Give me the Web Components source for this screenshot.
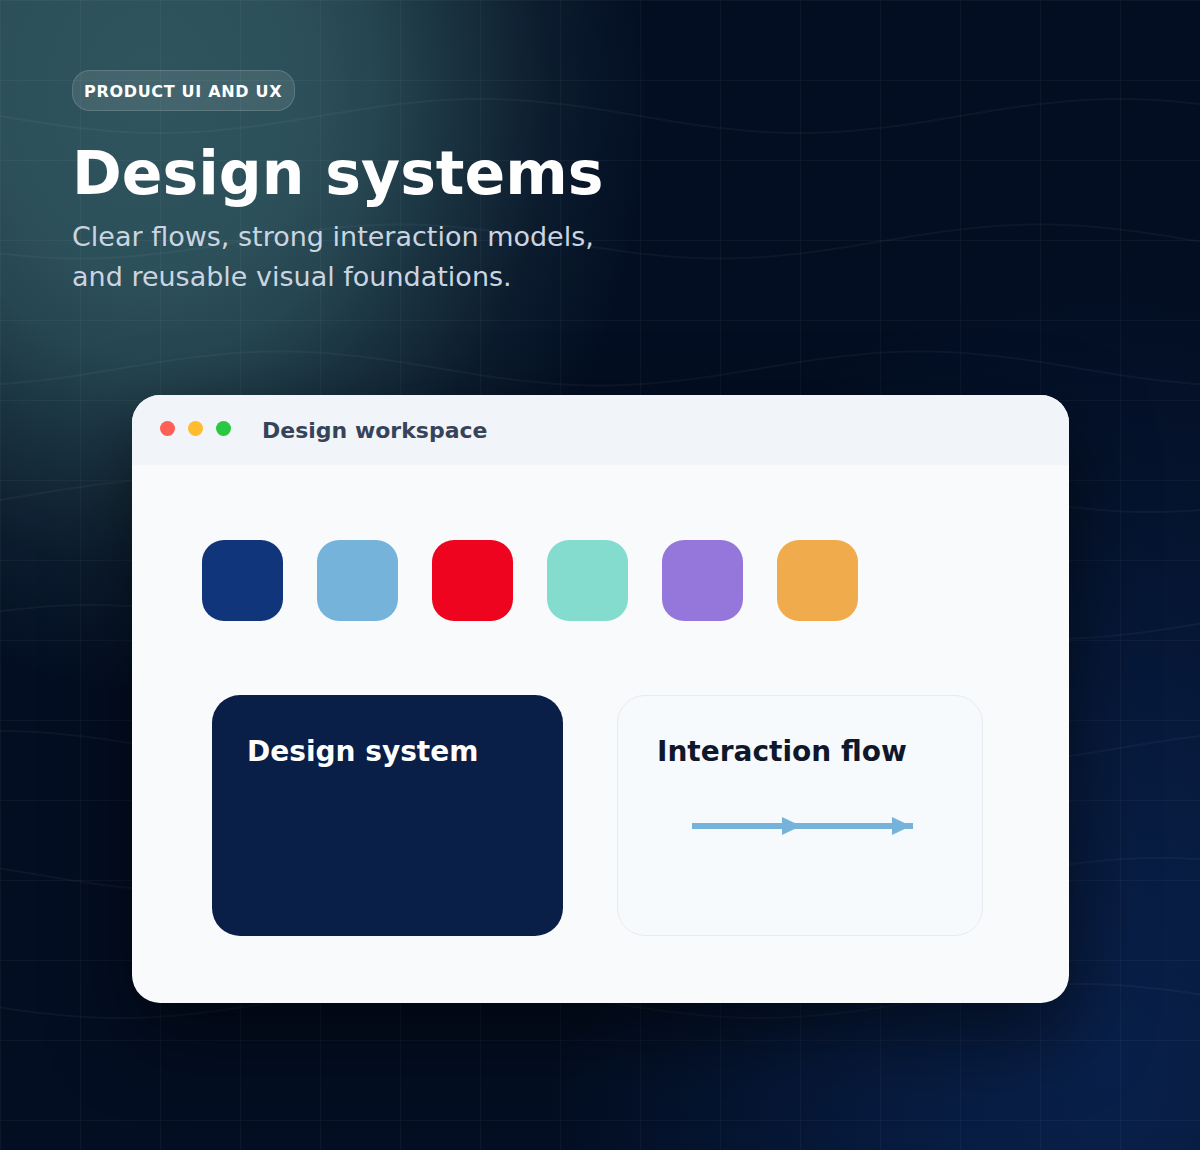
<!DOCTYPE html>
<html lang="en"><head><meta charset="utf-8"><title>Design systems</title>
<style>
html,body{margin:0;padding:0;background:#030e22}
body{font-family:"DejaVu Sans",sans-serif;width:1200px;height:1150px;overflow:hidden}
</style></head><body>
<ds-page>
  <ds-hero slot="hero" badge="PRODUCT UI AND UX" title-text="Design systems">Clear flows, strong interaction models,<br>and reusable visual foundations.</ds-hero>
  <ds-window slot="window" title-text="Design workspace">
    <ds-swatches slot="swatches" colors="#10357a,#76b3da,#ee041e,#84dccf,#9577dc,#f0ab4c"></ds-swatches>
    <ds-card slot="cards" variant="dark" heading="Design system"></ds-card>
    <ds-card slot="cards" variant="light" heading="Interaction flow"><ds-flow></ds-flow></ds-card>
  </ds-window>
</ds-page>
<script>
const def=(name,html,extra={})=>{
  const t=document.createElement('template');t.innerHTML=html;
  class C extends HTMLElement{
    constructor(){super();this.attachShadow({mode:'open'}).appendChild(t.content.cloneNode(true));}
    connectedCallback(){extra.init&&extra.init(this,this.shadowRoot);}
  }
  customElements.define(name,C);
};
def('ds-page',`<style>
:host{display:block;position:relative;width:1200px;height:1150px;overflow:hidden;color:#fff;
background:
 radial-gradient(500px 600px at 150px 90px,rgba(132,220,207,.34) 0,rgba(132,220,207,.32) 30%,rgba(132,220,207,.27) 45%,rgba(132,220,207,.18) 60%,rgba(132,220,207,.065) 80%,transparent 100%),
 radial-gradient(560px 800px at 1110px 1070px,rgba(16,54,122,.45) 0,rgba(16,54,122,.32) 40%,rgba(16,54,122,.14) 70%,transparent 100%),
 #030e22}
.grid{position:absolute;inset:0;pointer-events:none;
background-image:linear-gradient(rgba(255,255,255,.035) 1px,transparent 1px),linear-gradient(90deg,rgba(255,255,255,.035) 1px,transparent 1px);
background-size:80px 80px}
svg{position:absolute;inset:0;pointer-events:none}
path{fill:none;stroke:rgba(255,255,255,.04);stroke-width:2}
.wrap{position:relative;display:flex;flex-direction:column;padding:70px 0 0 72px}
.win{margin:0 0 0 60px}
</style>
<div class="grid"></div>
<svg width="1200" height="1150" viewBox="0 0 1200 1150" aria-hidden="true"></svg>
<div class="wrap"><slot name="hero"></slot><div class="win"><slot name="window"></slot></div></div>`,{init(h,r){
  const svg=r.querySelector('svg');if(svg.firstChild)return;
  // [centre y, x of the lowest point]: every wave has a 640px period and 17px amplitude
  [[116,160],[241.5,80],[368.5,600],[495,510],[622,410],[748,320],[875,200],[1001,120]].forEach(([c,t])=>{
    let d='';for(let x=0;x<=1200;x+=10){d+=(x?'L':'M')+x+' '+(c+17*Math.cos(2*Math.PI*(x-t)/640)).toFixed(1);}
    const p=document.createElementNS('http://www.w3.org/2000/svg','path');p.setAttribute('d',d);svg.appendChild(p);
  });
}});
def('ds-hero',`<style>
:host{display:block;height:325px}
.badge{display:inline-block;box-sizing:border-box;height:41px;padding:0 11.5px 0 11px;line-height:41px;font-size:16px;font-weight:700;letter-spacing:.68px;border-radius:18px;background:rgba(255,255,255,.1);border:1px solid rgba(255,255,255,.14);color:#fff}
h1{margin:22px 0 0;font-size:60px;font-weight:700;color:#fff;height:60px;line-height:81px}
p{margin:24px 0 0;font-size:27px;line-height:40px;color:#cbd5e1}
</style><div class="badge"></div><h1></h1><p><slot></slot></p>`,{init(h,r){r.querySelector('.badge').textContent=h.getAttribute('badge');r.querySelector('h1').textContent=h.getAttribute('title-text');}});
def('ds-window',`<style>
:host{display:block;width:937px;height:608px;border-radius:28px;background:#f8fafc;overflow:hidden;box-shadow:0 30px 80px rgba(0,0,0,.55)}
.bar{display:flex;align-items:center;height:70px;box-sizing:border-box;padding:0 0 0 28px;background:#f1f5f9}
.dots{display:flex;gap:13px;margin-top:-3px}
.dots i{display:block;width:15px;height:15px;border-radius:50%}
.t{margin-left:31px;font-size:22px;font-weight:700;color:#36445a}
.sw{padding:75px 0 0 70px}
.cards{display:flex;gap:54px;padding:74px 0 0 80px}
</style>
<div class="bar"><div class="dots"><i style="background:#ff5f57"></i><i style="background:#febc2e"></i><i style="background:#28c840"></i></div><div class="t"></div></div>
<div class="sw"><slot name="swatches"></slot></div>
<div class="cards"><slot name="cards"></slot></div>`,{init(h,r){r.querySelector('.t').textContent=h.getAttribute('title-text');}});
def('ds-swatches',`<style>:host{display:flex;gap:34px}i{display:block;width:81px;height:81px;border-radius:22px}</style>`,{init(h,r){if(r.querySelector('i'))return;h.getAttribute('colors').split(',').forEach(c=>{const i=document.createElement('i');i.style.background=c;r.appendChild(i);});}});
def('ds-card',`<style>
:host{display:block;box-sizing:border-box;height:241px;border-radius:28px}
:host([variant=dark]){width:351px;padding:37px 0 0 35px;background:#0a1f47;color:#fff}
:host([variant=light]){width:366px;padding:36px 0 0 39px;background:#f7fafc;border:1px solid #e7ebf0;color:#0f172a}
h2{margin:0;font-size:28px;line-height:40px;font-weight:700}
</style><h2></h2><slot></slot>`,{init(h,r){r.querySelector('h2').textContent=h.getAttribute('heading');}});
def('ds-flow',`<style>:host{display:block;margin:44px 0 0 35px;width:221px;height:20px}svg{display:block}</style>
<svg width="221" height="20" viewBox="0 0 221 20" aria-hidden="true"><path d="M0 7H221V13H0Z" fill="#76b3da"/><path d="M90 1L109 10L90 19Z" fill="#76b3da"/><path d="M200 1L219 10L200 19Z" fill="#76b3da"/></svg>`);
</script>
</body></html>
